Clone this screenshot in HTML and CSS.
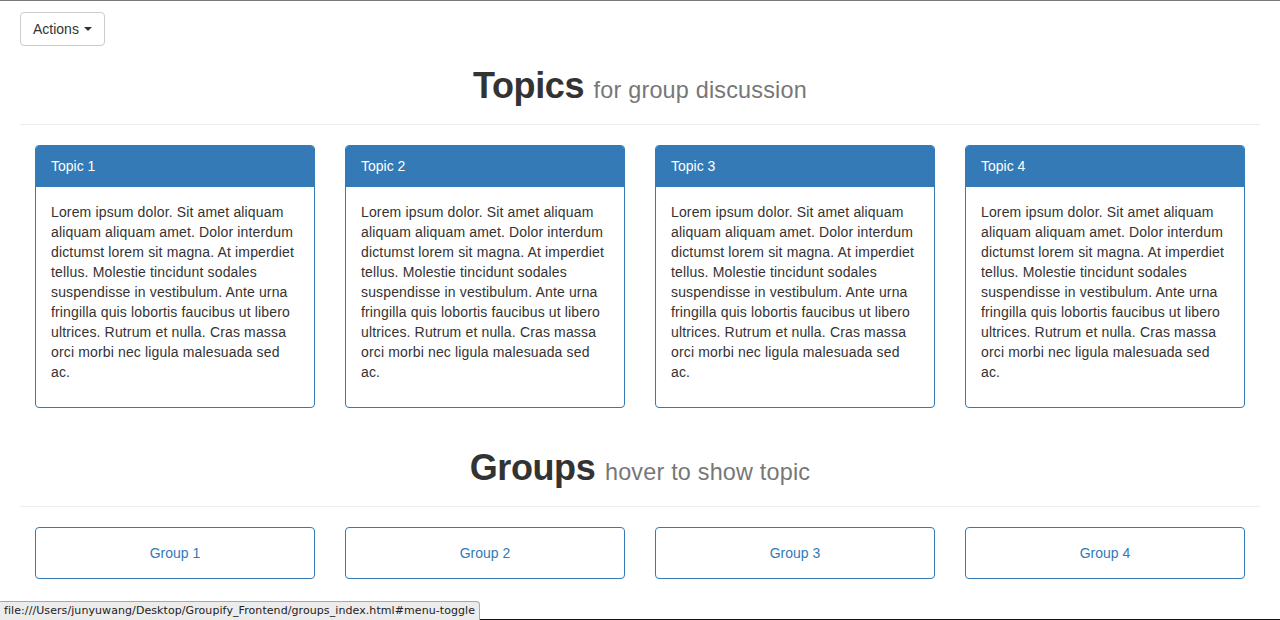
FILE: index.html
```html
<!DOCTYPE html>
<html lang="en">
<head>
<meta charset="utf-8">
<title>Groupify</title>
<link rel="stylesheet" href="styles.css">
</head>
<body>
<div class="page">
  <div class="toolbar">
    <button class="btn-actions" type="button">Actions <span class="caret"></span></button>
  </div>

  <div class="page-header">
    <h1>Topics <small>for group discussion</small></h1>
  </div>

  <div class="cards">
    <div class="panel">
      <div class="panel-heading">Topic 1</div>
      <div class="panel-body"><p>Lorem ipsum dolor. Sit amet aliquam aliquam aliquam amet. Dolor interdum dictumst lorem sit magna. At imperdiet tellus. Molestie tincidunt sodales suspendisse in vestibulum. Ante urna fringilla quis lobortis faucibus ut libero ultrices. Rutrum et nulla. Cras massa orci morbi nec ligula malesuada sed ac.</p></div>
    </div>
    <div class="panel">
      <div class="panel-heading">Topic 2</div>
      <div class="panel-body"><p>Lorem ipsum dolor. Sit amet aliquam aliquam aliquam amet. Dolor interdum dictumst lorem sit magna. At imperdiet tellus. Molestie tincidunt sodales suspendisse in vestibulum. Ante urna fringilla quis lobortis faucibus ut libero ultrices. Rutrum et nulla. Cras massa orci morbi nec ligula malesuada sed ac.</p></div>
    </div>
    <div class="panel">
      <div class="panel-heading">Topic 3</div>
      <div class="panel-body"><p>Lorem ipsum dolor. Sit amet aliquam aliquam aliquam amet. Dolor interdum dictumst lorem sit magna. At imperdiet tellus. Molestie tincidunt sodales suspendisse in vestibulum. Ante urna fringilla quis lobortis faucibus ut libero ultrices. Rutrum et nulla. Cras massa orci morbi nec ligula malesuada sed ac.</p></div>
    </div>
    <div class="panel">
      <div class="panel-heading">Topic 4</div>
      <div class="panel-body"><p>Lorem ipsum dolor. Sit amet aliquam aliquam aliquam amet. Dolor interdum dictumst lorem sit magna. At imperdiet tellus. Molestie tincidunt sodales suspendisse in vestibulum. Ante urna fringilla quis lobortis faucibus ut libero ultrices. Rutrum et nulla. Cras massa orci morbi nec ligula malesuada sed ac.</p></div>
    </div>
  </div>

  <div class="page-header">
    <h1>Groups <small>hover to show topic</small></h1>
  </div>

  <div class="groups">
    <a class="group" href="#">Group 1</a>
    <a class="group" href="#">Group 2</a>
    <a class="group" href="#">Group 3</a>
    <a class="group" href="#">Group 4</a>
  </div>
</div>

<div class="frame-bottom"></div>
<div class="statusbar">file:///Users/junyuwang/Desktop/Groupify_Frontend/groups_index.html#menu-toggle</div>
</body>
</html>
```

FILE: styles.css
```css
* {
  box-sizing: border-box;
}

html, body {
  margin: 0;
  padding: 0;
  background: #fff;
}

body {
  font-family: "Liberation Sans", Arial, Helvetica, sans-serif;
  font-size: 14px;
  line-height: 20px;
  color: #333;
  border-top: 1px solid #7a7a7a;
  height: 620px;
  overflow: hidden;
}

.page {
  padding: 11px 20px 0;
}

.toolbar {
  display: flex;
}

.btn-actions {
  font-family: inherit;
  font-size: 14px;
  line-height: 20px;
  color: #333;
  background: #fff;
  border: 1px solid #ccc;
  border-radius: 4px;
  padding: 6px 12px;
  height: 34px;
  cursor: pointer;
}

.caret {
  display: inline-block;
  width: 0;
  height: 0;
  margin-left: 1px;
  vertical-align: middle;
  border-top: 4px solid #333;
  border-left: 4px solid transparent;
  border-right: 4px solid transparent;
  position: relative;
  top: -1px;
}

.page-header {
  margin: 20px 0 20px;
  padding-bottom: 9px;
  border-bottom: 1px solid #eee;
}

.page-header h1 {
  margin: 0 0 10px;
  text-align: center;
  font-size: 36px;
  line-height: 39px;
  height: 39px;
  font-weight: 700;
  color: #333;
  letter-spacing: -0.4px;
}

.page-header small {
  font-size: 65%;
  line-height: 1;
  font-weight: 400;
  color: #777;
  letter-spacing: 0.2px;
}

.cards,
.groups {
  display: grid;
  grid-template-columns: repeat(4, 280px);
  column-gap: 30px;
  padding: 0 15px;
}

.cards {
  margin-bottom: 40px;
}

.panel {
  border: 1px solid #337ab7;
  border-radius: 4px;
  background: #fff;
  overflow: hidden;
}

.panel-heading {
  background: #337ab7;
  color: #fff;
  padding: 10px 15px;
  border-bottom: 1px solid #337ab7;
}

.panel-body {
  padding: 15px;
  letter-spacing: 0.15px;
}

.panel-body p {
  margin: 0 0 10px;
}

.group {
  display: block;
  border: 1px solid #337ab7;
  border-radius: 4px;
  padding: 15px;
  text-align: center;
  color: #337ab7;
  text-decoration: none;
  height: 52px;
}

.frame-bottom {
  position: fixed;
  left: 0;
  right: 0;
  bottom: 0;
  height: 1px;
  background: #111;
}

.statusbar {
  position: fixed;
  left: 0;
  bottom: 0;
  width: 480px;
  height: 19px;
  padding: 1px 0 0 4px;
  background: #ececec;
  border-top: 1px solid #a8a8a8;
  border-right: 1px solid #a8a8a8;
  border-top-right-radius: 4px;
  font-family: "DejaVu Sans", "Liberation Sans", sans-serif;
  font-size: 11px;
  line-height: 15px;
  letter-spacing: 0.08px;
  color: #222;
  white-space: nowrap;
  overflow: hidden;
}
```
